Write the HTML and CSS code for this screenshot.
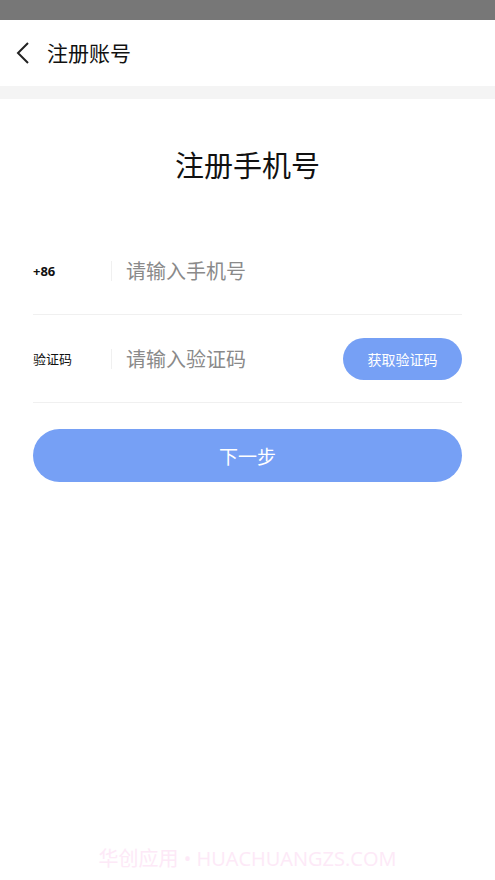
FILE: index.html
```html
<!DOCTYPE html>
<html lang="zh-CN">
<head>
  <meta charset="UTF-8">
  <meta name="viewport" content="width=device-width, initial-scale=1">
  <title>注册账号</title>
  <link rel="stylesheet" href="styles.css">
</head>
<body>

<div class="status-bar"></div>

<header class="top-bar">
  <button class="back-button" aria-label="返回">
    <svg width="14" height="22" viewBox="0 0 14 22">
      <path d="M12 1 L2 11 L12 21" fill="none" stroke="#222" stroke-width="2"/>
    </svg>
  </button>
  <span class="top-title">注册账号</span>
</header>

<div class="gap-band"></div>

<main class="content">
  <h1 class="page-title">注册手机号</h1>

  <div class="field-row">
    <span class="field-label bold">+86</span>
    <span class="divider"></span>
    <input class="field-input" type="tel" placeholder="请输入手机号">
  </div>

  <div class="field-row">
    <span class="field-label">验证码</span>
    <span class="divider"></span>
    <input class="field-input" type="text" placeholder="请输入验证码">
    <button class="code-button">获取验证码</button>
  </div>

  <button class="next-button">下一步</button>
</main>

<div class="watermark">华创应用 • HUACHUANGZS.COM</div>

</body>
</html>
```

FILE: styles.css
```css
body {
  margin: 0;
  font-family: "Noto Sans CJK SC", "Noto Sans", sans-serif;
  background: #fff;
  color: #111;
  height: 880px;
  display: flex;
  flex-direction: column;
}
.status-bar {
  height: 20px;
  background: #777777;
}
.top-bar {
  height: 66px;
  display: flex;
  align-items: center;
  padding-left: 16px;
  padding-bottom: 3px;
  box-sizing: border-box;
  background: #fff;
}
.back-button {
  background: none;
  border: none;
  padding: 0;
  width: 31px;
  height: 22px;
  display: flex;
  align-items: center;
  margin-top: 2px;
}
.top-title {
  font-size: 21px;
  color: #111;
}
.gap-band {
  height: 13px;
  background: #f4f4f4;
}
.content {
  padding: 0 33px;
  flex: 1;
}
.page-title {
  margin: 45px 0 43px;
  text-align: center;
  font-size: 29px;
  font-weight: normal;
  line-height: 40px;
}
.field-row {
  height: 87px;
  display: flex;
  align-items: center;
  border-bottom: 1px solid #f0f0f0;
}
.field-label {
  width: 78px;
  font-size: 13px;
}
.field-label.bold {
  font-weight: bold;
  font-family: "Open Sans", "Noto Sans", sans-serif;
}
.divider {
  width: 1px;
  height: 20px;
  background: #f0f0f0;
  margin-right: 14px;
}
.field-input {
  flex: 1;
  min-width: 0;
  border: none;
  outline: none;
  font-family: inherit;
  font-size: 20px;
  color: #333;
  padding: 0;
  background: transparent;
}
.field-input::placeholder {
  color: #8a8a8a;
}
.code-button {
  width: 119px;
  height: 42px;
  border: none;
  border-radius: 21px;
  background: #76a0f5;
  color: #fff;
  font-family: inherit;
  font-size: 14px;
}
.next-button {
  display: block;
  width: 100%;
  height: 53px;
  margin-top: 26px;
  border: none;
  border-radius: 27px;
  background: #76a0f5;
  color: #fff;
  font-family: inherit;
  font-size: 19px;
}
.watermark {
  text-align: center;
  font-family: "Open Sans", "Noto Sans CJK SC", sans-serif;
  font-size: 20px;
  color: #fde9f7;
  padding-bottom: 8px;
}
```
